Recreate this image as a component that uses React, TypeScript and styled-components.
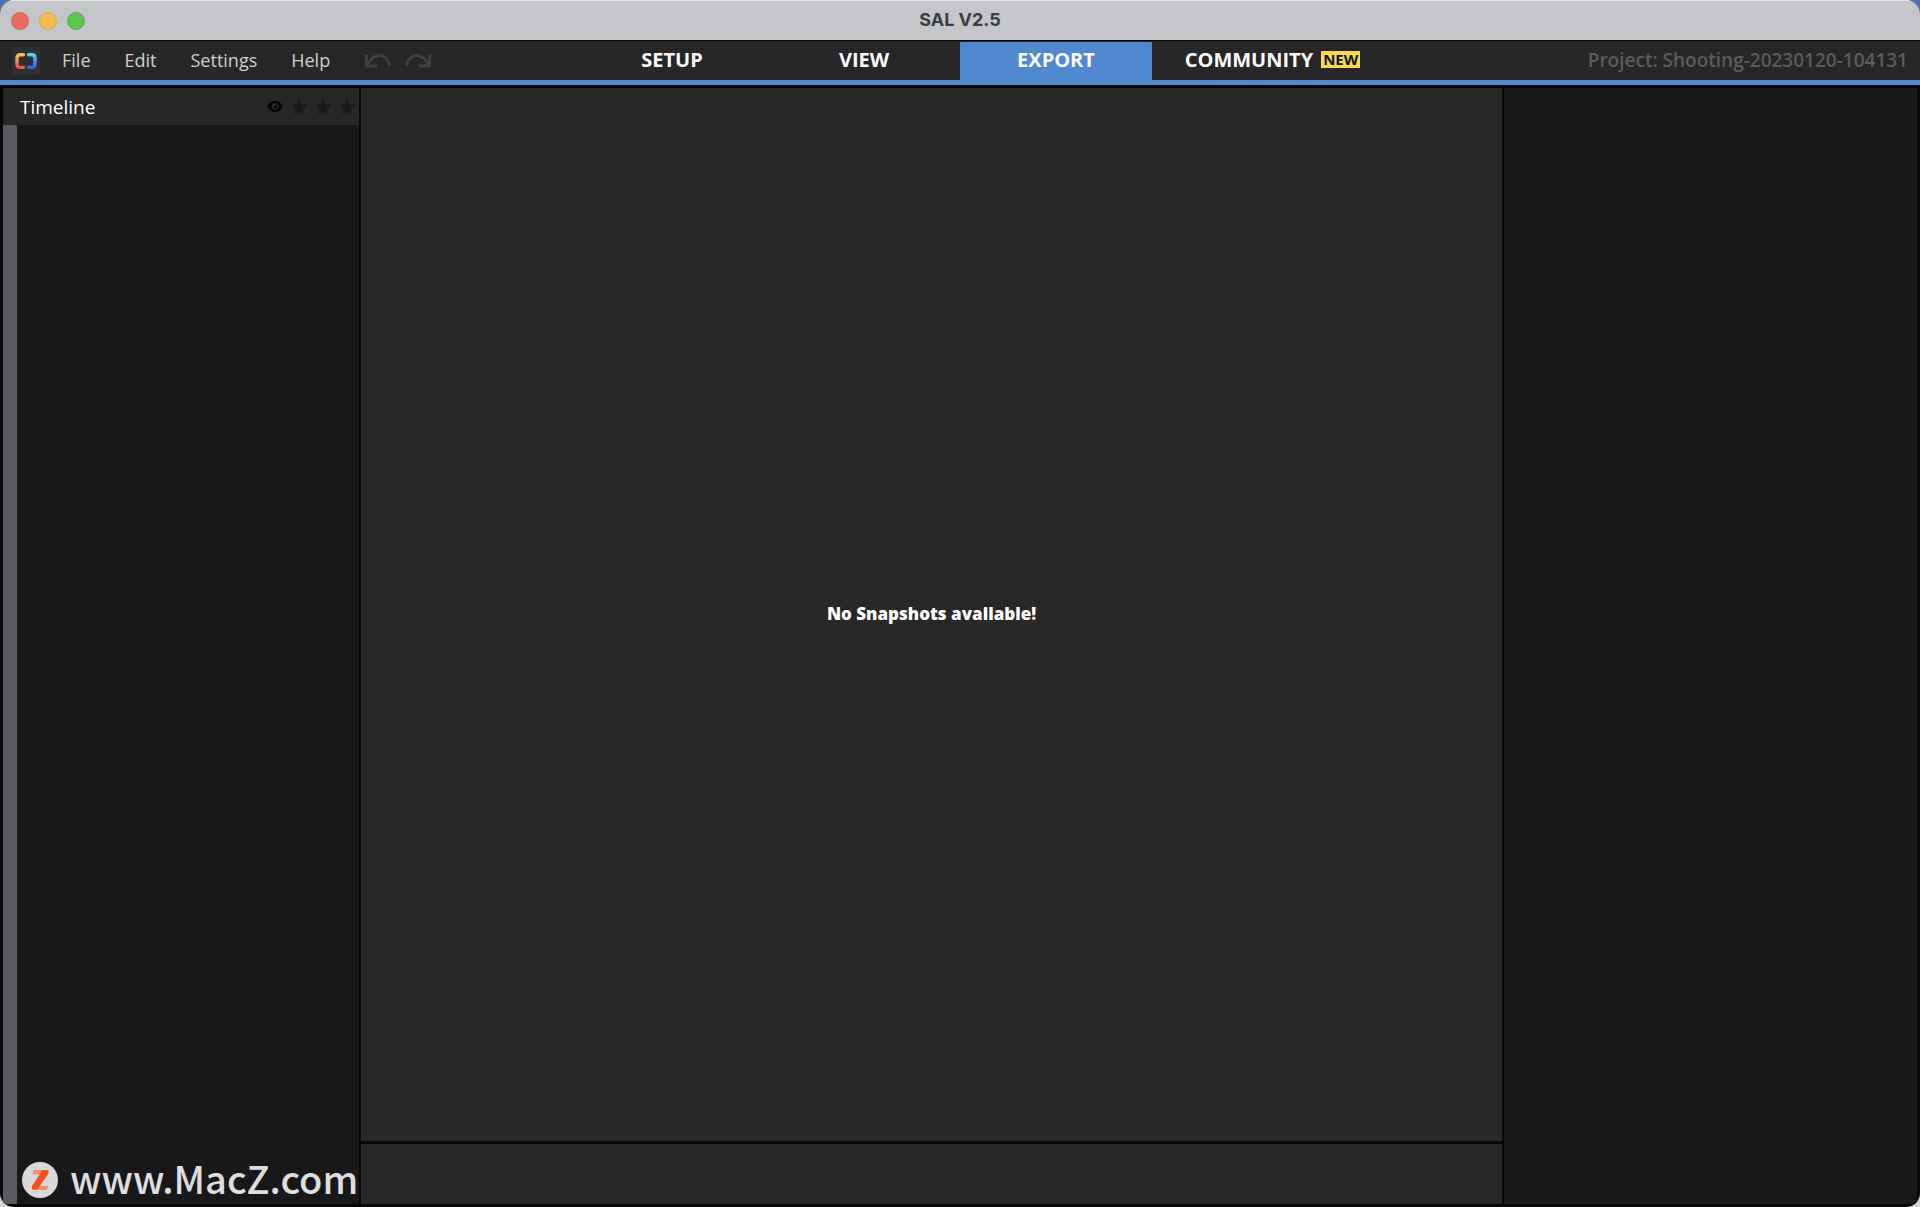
import React, { useState } from "react";
import styled, { createGlobalStyle } from "styled-components";

const color = {
  chrome: "#c5c6ca",
  bar: "#272727",
  accent: "#5089cf",
  line: "#060607",
  dark: "#18181a",
  panel: "#282828",
};

const GlobalStyle = createGlobalStyle`
  * { box-sizing: border-box; }
  body {
    margin: 0;
    background: linear-gradient(to bottom, #5470b4 0 50%, #d4d4d6 50%);
    font-family: "Open Sans", "Noto Sans", sans-serif;
  }
  button { font-family: inherit; border: 0; padding: 0; background: none; cursor: pointer; }
`;

const Window = styled.div`
  display: flex;
  flex-direction: column;
  height: 100vh;
  overflow: hidden;
  border-radius: 14px;
  background: ${color.line};
`;

const TitleBar = styled.header`
  display: grid;
  grid-template-columns: 1fr auto 1fr;
  align-items: center;
  height: 40px;
  padding: 0 11px;
  border-top: 1px solid #e4e5e8;
  background: ${color.chrome};
`;

const Lights = styled.div`
  display: flex;
  gap: 10px;
`;

const Light = styled.button<{ $fill: string; $edge: string }>`
  width: 18px;
  height: 18px;
  border: 1px solid ${(p) => p.$edge};
  border-radius: 50%;
  background: ${(p) => p.$fill};
`;

const Title = styled.h1`
  margin: 0;
  padding-bottom: 2px;
  font: 700 18px/24px Inter, sans-serif;
  color: #3c3d40;
`;

const MenuBar = styled.div`
  display: grid;
  grid-template-columns: 30% 1fr auto;
  height: 44px;
  margin: 1px 0 3px;
  border-bottom: 5px solid ${color.accent};
  background: ${color.bar};
`;

const MenuGroup = styled.nav`
  display: flex;
  align-items: center;
  padding-left: 12px;
`;

const LogoTile = styled.span`
  display: flex;
  margin-right: 5px;
  border-radius: 2px;
  background: #2e2f33;
`;

const MenuButton = styled.button`
  padding: 0 17px 2px;
  font-size: 18px;
  font-weight: 500;
  line-height: 24px;
  color: #d0d0d0;
`;

const HistoryButtons = styled.div`
  display: flex;
  gap: 12px;
  margin-left: 17px;
`;

const IconButton = styled.button`
  display: flex;
  color: ${color.dark};
`;

const HistoryButton = styled(IconButton)`
  color: #414142;
`;

const Tabs = styled.nav`
  display: grid;
  grid-template-columns: repeat(3, 10vw) 241px;
  padding-top: 1px;
`;

const Tab = styled.button<{ $active: boolean }>`
  display: flex;
  align-items: center;
  justify-content: center;
  gap: 8px;
  padding-bottom: 3px;
  font-size: 20px;
  font-weight: 700;
  line-height: 24px;
  color: #fafafa;
  background: ${(p) => (p.$active ? color.accent : "transparent")};
`;

const NewBadge = styled.span`
  padding: 0 2px;
  font-size: 15px;
  line-height: 17px;
  color: #141414;
  background: #f6da54;
`;

const Project = styled.span`
  align-self: center;
  padding: 0 12px 2px 0;
  font-size: 19px;
  font-weight: 600;
  line-height: 24px;
  color: #5c5c5d;
`;

const Workspace = styled.div`
  display: grid;
  grid-template-columns: 356px 1fr 413px;
  flex: 1;
  gap: 2px;
  min-height: 0;
  padding: 0 3px 3px;
`;

const Timeline = styled.aside`
  display: flex;
  flex-direction: column;
  min-width: 0;
  background: ${color.dark};
`;

const TimelineHeader = styled.div`
  display: flex;
  align-items: center;
  justify-content: space-between;
  height: 37px;
  padding: 0 4px 0 17px;
  background: ${color.bar};
`;

const TimelineTitle = styled.h2`
  margin: 0;
  font-size: 19px;
  font-weight: 500;
  line-height: 24px;
  color: #fff;
`;

const Filters = styled.div`
  display: flex;
  align-items: center;
  gap: 8px;
`;

const TimelineBody = styled.div`
  display: flex;
  flex: 1;
  align-items: flex-end;
  border-left: 14px solid #5b595d;
`;

const SiteMark = styled.div`
  position: relative;
  z-index: 1;
  display: flex;
  align-items: center;
  gap: 12px;
  padding-left: 5px;
  color: #dedede;
  white-space: nowrap;
`;

const SiteName = styled.span`
  padding-bottom: 4px;
  font: 500 38px/44px "Noto Sans CJK SC", sans-serif;
`;

const Center = styled.main`
  display: grid;
  grid-template-rows: 1fr 60px;
  gap: 3px;
`;

const Stage = styled.section`
  display: flex;
  align-items: center;
  justify-content: center;
  background: ${color.panel};
`;

const Empty = styled.p`
  margin: 0;
  padding-bottom: 2px;
  font-size: 17px;
  font-weight: 800;
  line-height: 24px;
  color: #fff;
`;

const Footer = styled.footer`
  background: ${color.panel};
`;

const Details = styled.aside`
  background: ${color.dark};
`;

const Logo = () => (
  <svg width="28" height="28" viewBox="0 0 28 28" fill="none" strokeWidth="3.4" strokeLinecap="round">
    <defs>
      <linearGradient id="warm" x1="0" y1="7" x2="0" y2="21" gradientUnits="userSpaceOnUse">
        <stop offset="0" stopColor="#f8c84e" />
        <stop offset="1" stopColor="#ec5148" />
      </linearGradient>
      <linearGradient id="cool" x1="0" y1="7" x2="0" y2="21" gradientUnits="userSpaceOnUse">
        <stop offset="0" stopColor="#5fd5ec" />
        <stop offset="1" stopColor="#2b62e2" />
      </linearGradient>
    </defs>
    <path d="M11.5 7.8H8.2Q5 7.8 5 11v6.200Q5 20.400 8.200 20.400h3.300" stroke="url(#warm)" />
    <path d="M16.500 7.800h3.300Q23 7.800 23 11v6.200Q23 20.400 19.800 20.400h-3.300" stroke="url(#cool)" />
  </svg>
);

const UndoIcon = () => (
  <svg width="28" height="16" viewBox="0 0 28 16" fill="none" stroke="currentColor" strokeWidth="2.800">
    <path d="M2.400 2v11H13M3 12.500C7.500 4 12 2.400 15.500 2.400c5 0 8.500 4.500 10.500 10.400" />
  </svg>
);

const RedoIcon = () => (
  <svg width="28" height="16" viewBox="0 0 28 16" fill="none" stroke="currentColor" strokeWidth="2.800">
    <path d="M25.600 2v11H15M25 12.500C20.500 4 16 2.400 12.500 2.400c-5 0-8.500 4.500-10.500 10.400" />
  </svg>
);

const EyeIcon = () => (
  <svg width="16" height="16" viewBox="0 0 16 16">
    <path d="M0 7.500C2 3.800 4.800 2 8 2s6 1.800 8 5.500C14 11.200 11.200 13 8 13S2 11.200 0 7.500Z" fill="#050505" />
    <circle cx="8" cy="7.500" r="3.300" fill="#2a2a2a" />
    <path d="M5.500 9.500 10 5v4.500Z" fill="#050505" />
  </svg>
);

const StarIcon = () => (
  <svg width="16" height="16" viewBox="0 0 16 16" fill="currentColor">
    <path d="m8 0 2.200 5.300 5.800.5-4.400 3.800L12.900 15.300 8 12.300 3.100 15.300 4.400 9.600 0 5.800l5.800-.5Z" />
  </svg>
);

const SiteIcon = () => (
  <svg width="36" height="36" viewBox="0 0 36 36">
    <circle cx="18" cy="18" r="18" fill="#d8d8d8" />
    <path d="M11.500 8H23l-2.500 4.500H10.500Z" fill="#f5926f" />
    <path d="M12.500 24H26l-1 4H11Z" fill="#f5926f" />
    <path d="M20.500 8h6v3.500L15.500 27.500H10V24Z" fill="#f4511e" />
  </svg>
);

const menus = ["File", "Edit", "Settings", "Help"];
const tabs = ["SETUP", "VIEW", "EXPORT", "COMMUNITY"];
const lights = [
  { label: "Close", fill: "#ed6a5e", edge: "#d5605a" },
  { label: "Minimize", fill: "#f5bf4f", edge: "#dba94b" },
  { label: "Zoom", fill: "#61c554", edge: "#57ad4e" },
];

export default function App() {
  const [active, setActive] = useState("EXPORT");
  return (
    <>
      <GlobalStyle />
      <Window>
        <TitleBar>
          <Lights>
            {lights.map((l) => (
              <Light key={l.label} aria-label={l.label} $fill={l.fill} $edge={l.edge} />
            ))}
          </Lights>
          <Title>SAL V2.5</Title>
        </TitleBar>
        <MenuBar>
          <MenuGroup>
            <LogoTile><Logo /></LogoTile>
            {menus.map((m) => <MenuButton key={m}>{m}</MenuButton>)}
            <HistoryButtons>
              <HistoryButton aria-label="Undo"><UndoIcon /></HistoryButton>
              <HistoryButton aria-label="Redo"><RedoIcon /></HistoryButton>
            </HistoryButtons>
          </MenuGroup>
          <Tabs>
            {tabs.map((t) => (
              <Tab key={t} $active={t === active} onClick={() => setActive(t)}>
                {t}
                {t === "COMMUNITY" && <NewBadge>NEW</NewBadge>}
              </Tab>
            ))}
          </Tabs>
          <Project>Project: Shooting-20230120-104131</Project>
        </MenuBar>
        <Workspace>
          <Timeline>
            <TimelineHeader>
              <TimelineTitle>Timeline</TimelineTitle>
              <Filters>
                <IconButton aria-label="Visible"><EyeIcon /></IconButton>
                {[1, 2, 3].map((n) => (
                  <IconButton key={n} aria-label={`Rating ${n}`}><StarIcon /></IconButton>
                ))}
              </Filters>
            </TimelineHeader>
            <TimelineBody>
              <SiteMark>
                <SiteIcon />
                <SiteName>www.MacZ.com</SiteName>
              </SiteMark>
            </TimelineBody>
          </Timeline>
          <Center>
            <Stage><Empty>No Snapshots available!</Empty></Stage>
            <Footer />
          </Center>
          <Details />
        </Workspace>
      </Window>
    </>
  );
}
